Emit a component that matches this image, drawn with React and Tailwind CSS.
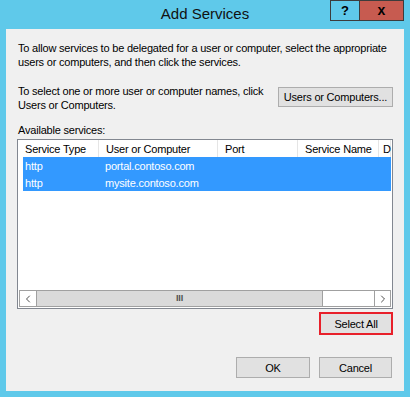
import { ChevronLeft, ChevronRight } from "lucide-react";

const COLUMNS = [
  { label: "Service Type", width: "w-[81px] pl-[7px]" },
  { label: "User or Computer", width: "w-[119px] pl-[7px]" },
  { label: "Port", width: "w-[80px] pl-[7px]" },
  { label: "Service Name", width: "w-[81px] pl-[7px]" },
  { label: "D", width: "w-[12px] pl-[4px]" },
];

const ROWS = [
  { type: "http", host: "portal.contoso.com" },
  { type: "http", host: "mysite.contoso.com" },
];

function WinButton({ children, className = "" }) {
  return (
    <button
      className={`flex items-center justify-center whitespace-nowrap border border-[#adadad] bg-[#e1e1e1] text-[11px] tracking-[-0.2px] text-black ${className}`}
    >
      {children}
    </button>
  );
}

function App() {
  return (
    <div
      className="flex h-[397px] w-[410px] flex-col bg-[#5fc9ea]"
      style={{ fontFamily: '"Liberation Sans", Arial, sans-serif' }}
    >
      {/* Title bar */}
      <div className="relative flex h-[29px] shrink-0 items-center justify-center">
        <span className="text-[15px] text-[#111]">Add Services</span>
        <div className="absolute right-[6px] top-0 flex h-[21px]">
          <div className="flex w-[29px] items-center justify-center border border-r-0 border-[#3c3c3c] bg-[#5fc9ea] text-[13px] font-bold text-black">
            ?
          </div>
          <div className="flex w-[45px] items-center justify-center border border-[#3c3c3c] bg-[#c75b50] text-[14px] font-bold text-black">
            x
          </div>
        </div>
      </div>

      {/* Body */}
      <div className="mx-[6px] mb-[6px] flex flex-1 flex-col bg-[#f0f0f0] px-[11px] pt-[12px] text-[11px] leading-[14px] tracking-[-0.2px] text-black">
        <p className="pl-[1px]">
          To allow services to be delegated for a user or computer, select the appropriate users or computers, and then click the services.
        </p>

        <div className="mt-[15px] flex items-start justify-between pl-[1px]">
          <p className="w-[250px]">
            To select one or more user or computer names, click Users or Computers.
          </p>
          <WinButton className="mt-[3px] h-[20px] w-[115px]">Users or Computers...</WinButton>
        </div>

        <p className="mt-[11px] pl-[1px]">Available services:</p>

        {/* List view */}
        <div className="mt-[2px] flex h-[170px] flex-col border border-[#828790] bg-white">
          <div className="flex h-[17px] shrink-0 overflow-hidden">
            {COLUMNS.map((c) => (
              <div
                key={c.label}
                className={`flex shrink-0 items-center border-r border-[#e5e5e5] ${c.width}`}
              >
                <span className="whitespace-nowrap">{c.label}</span>
              </div>
            ))}
          </div>
          <div className="flex-1 pl-[5px] pr-[1px]">
            {ROWS.map((r) => (
              <div key={r.host} className="flex h-[17px] items-center bg-[#3399ff] text-white">
                <span className="w-[82px] pl-[2px]">{r.type}</span>
                <span>{r.host}</span>
              </div>
            ))}
          </div>
          {/* Horizontal scrollbar */}
          <div className="mx-[1px] mb-[1px] flex h-[17px] shrink-0 border border-[#a0a0a0] bg-white">
            <div className="flex w-[17px] items-center justify-center border-r border-[#a0a0a0] text-[#505050]">
              <ChevronLeft size={12} strokeWidth={2} />
            </div>
            <div className="flex w-[286px] items-center justify-center border-r border-[#a0a0a0] bg-[#dadada] text-[9px] font-bold leading-none text-[#505050]">
              III
            </div>
            <div className="flex-1" />
            <div className="flex w-[16px] items-center justify-center border-l border-[#a0a0a0] text-[#505050]">
              <ChevronRight size={12} strokeWidth={2} />
            </div>
          </div>
        </div>

        <div className="mt-[3px] flex justify-end">
          <div className="border-2 border-[#e8202a]">
            <WinButton className="h-[19px] w-[70px] border-0">Select All</WinButton>
          </div>
        </div>

        <div className="mt-[22px] flex justify-end gap-[9px] pr-[1px]">
          <WinButton className="h-[21px] w-[74px] border-[#707070]">OK</WinButton>
          <WinButton className="h-[21px] w-[73px] border-[#707070]">Cancel</WinButton>
        </div>
      </div>
    </div>
  );
}

export default App;
